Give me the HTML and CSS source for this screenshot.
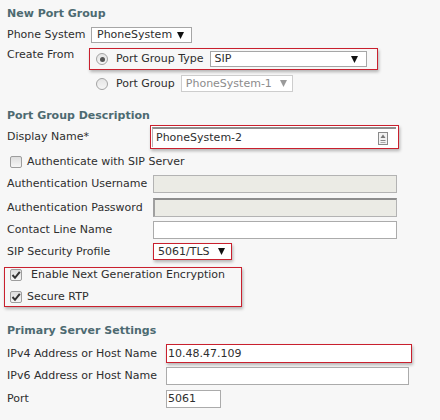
FILE: index.html
```html
<!DOCTYPE html>
<html>
<head>
<meta charset="utf-8">
<link rel="stylesheet" href="styles.css">
</head>
<body>
<div class="page">
  <div class="h">New Port Group</div>

  <div class="row r-phone">
    <div class="lbl w1">Phone System</div>
    <div class="sel sel-phone"><span>PhoneSystem</span><svg class="arr" width="7" height="7" viewBox="0 0 7 7"><polygon points="0,0 7,0 3.5,7" fill="#111"/></svg></div>
  </div>

  <div class="row r-create">
    <div class="lbl w1b">Create From</div>
    <div class="mark mark-create">
      <span class="radio on"></span>
      <span class="rtext">Port Group Type</span>
      <div class="sel sel-sip"><span>SIP</span><svg class="arr" width="7" height="7" viewBox="0 0 7 7"><polygon points="0,0 7,0 3.5,7" fill="#111"/></svg></div>
    </div>
  </div>

  <div class="row r-radio2">
    <span class="radio"></span>
    <span class="rtext">Port Group</span>
    <div class="sel sel-dis"><span>PhoneSystem-1</span><svg class="arr" width="7" height="7" viewBox="0 0 7 7"><polygon points="0,0 7,0 3.5,7" fill="#9a9a9a"/></svg></div>
  </div>

  <div class="h h2">Port Group Description</div>

  <div class="row r-display">
    <div class="lbl w2a">Display Name*</div>
    <div class="mark mark-display">
      <div class="inp inp-display"><span>PhoneSystem-2</span>
        <svg class="ico" width="10" height="13" viewBox="0 0 10 13"><rect x="0.5" y="0.5" width="9" height="12" fill="#f2f2f2" stroke="#8a8a8a"/><polygon points="5,2.5 7.5,6 2.5,6" fill="#777"/><rect x="2.5" y="8" width="5" height="1" fill="#888"/><rect x="2.5" y="10" width="5" height="1" fill="#aaa"/></svg>
      </div>
    </div>
  </div>

  <div class="row r-auth">
    <span class="cb"></span>
    <span class="cbtext">Authenticate with SIP Server</span>
  </div>

  <div class="row r-user">
    <div class="lbl w2">Authentication Username</div>
    <div class="inp inp-dis"></div>
  </div>

  <div class="row r-pass">
    <div class="lbl w2">Authentication Password</div>
    <div class="inp inp-dis inp-inset"></div>
  </div>

  <div class="row r-contact">
    <div class="lbl w2">Contact Line Name</div>
    <div class="inp inp-wide"></div>
  </div>

  <div class="row r-sipsec">
    <div class="lbl w2">SIP Security Profile</div>
    <div class="mark mark-sipsec"><span>5061/TLS</span><svg class="arr" width="7" height="7" viewBox="0 0 7 7"><polygon points="0,0 7,0 3.5,7" fill="#111"/></svg></div>
  </div>

  <div class="mark mark-checks">
    <div class="crow">
      <span class="cb on"><svg width="10" height="10" viewBox="0 0 10 10"><path d="M1.5 5 L4 7.8 L8.8 1.8" fill="none" stroke="#333" stroke-width="2"/></svg></span>
      <span class="cbtext t-wide">Enable Next Generation Encryption</span>
    </div>
    <div class="crow">
      <span class="cb on"><svg width="10" height="10" viewBox="0 0 10 10"><path d="M1.5 5 L4 7.8 L8.8 1.8" fill="none" stroke="#333" stroke-width="2"/></svg></span>
      <span class="cbtext">Secure RTP</span>
    </div>
  </div>

  <div class="h h3">Primary Server Settings</div>

  <div class="row r-ipv4">
    <div class="lbl w3">IPv4 Address or Host Name</div>
    <div class="mark mark-ipv4"><span>10.48.47.109</span></div>
  </div>

  <div class="row r-ipv6">
    <div class="lbl w3">IPv6 Address or Host Name</div>
    <div class="inp inp-ipv6"></div>
  </div>

  <div class="row r-port">
    <div class="lbl w3">Port</div>
    <div class="inp inp-port"><span>5061</span></div>
  </div>
</div>
</body>
</html>
```

FILE: styles.css
```css
* { box-sizing: border-box; }

body {
  margin: 0;
  background: #f7f7f7;
  font-family: "DejaVu Sans", Verdana, sans-serif;
  font-size: 11px;
  color: #2e2e2e;
}

.page {
  padding: 7px 0 0 7px;
  display: flex;
  flex-direction: column;
  align-items: flex-start;
}

.h {
  font-weight: bold;
  color: #4d6a71;
  line-height: 14px;
  height: 14px;
  white-space: nowrap;
}
.h2 { margin-top: 17px; }
.h3 { margin-top: 17px; }

.row {
  display: flex;
  align-items: center;
  white-space: nowrap;
}

.lbl { line-height: 14px; flex: none; }
.w1 { width: 84px; }
.w1b { width: 82px; }
.w2a { width: 143px; }
.w2 { width: 146px; }
.w3 { width: 159px; }

/* selects */
.sel {
  display: flex;
  align-items: center;
  justify-content: space-between;
  background: #fff;
  border: 1px solid #a6a6a6;
  line-height: 14px;
}
.arr { flex: none; display: block; }

.r-phone { margin-top: 6px; height: 16px; }
.sel-phone { width: 101px; height: 16px; padding: 0 7px 0 5px; }

.r-create { margin-top: 5px; height: 22px; align-items: flex-start; }

.mark {
  border: 1px solid #c9202e;
  box-shadow: 1px 2px 3px rgba(0, 0, 0, 0.28);
}

.mark-create {
  width: 289px;
  height: 22px;
  display: flex;
  align-items: center;
  padding-left: 6px;
}

.radio {
  flex: none;
  width: 12px;
  height: 12px;
  border-radius: 50%;
  border: 1px solid #a3a3a3;
  background: linear-gradient(#e4e4e4, #f6f6f6);
  display: inline-flex;
  align-items: center;
  justify-content: center;
}
.radio.on::after {
  content: "";
  width: 5px;
  height: 5px;
  border-radius: 50%;
  background: #555;
}

.rtext { margin-left: 8px; line-height: 14px; }

.sel-sip { width: 157px; height: 16px; margin-left: 6px; padding: 0 8px 0 4px; }

.r-radio2 { margin-top: 5px; height: 17px; padding-left: 89px; }
.sel-dis {
  width: 112px;
  height: 17px;
  margin-left: 6px;
  padding: 0 5px 0 4px;
  border-color: #cdcdcd;
  color: #8c8c8c;
}

.r-display { margin-top: 2px; height: 24px; }
.mark-display {
  width: 249px;
  height: 24px;
  padding: 1px 2px 1px 1px;
  background: #fff;
}
.inp {
  background: #fff;
  border: 1px solid #ababab;
  height: 18px;
  display: flex;
  align-items: center;
  line-height: 14px;
}
.inp-display {
  width: 244px;
  height: 20px;
  border: none;
  border-top: 2px solid #8e8e8e;
  border-left: 1px solid #b5b5b5;
  padding: 0 8px 0 3px;
  justify-content: space-between;
}
.ico { display: block; flex: none; }

.r-auth { margin-top: 6px; height: 14px; padding-left: 3px; }

.cb {
  flex: none;
  width: 12px;
  height: 12px;
  border: 1px solid #9d9d9d;
  border-radius: 2px;
  background: linear-gradient(#dedede, #f5f5f5);
  display: inline-flex;
  align-items: center;
  justify-content: center;
}
.cb svg { display: block; }
.cbtext { margin-left: 5px; line-height: 14px; }
.t-wide { margin-left: 9px; }

.r-user { margin-top: 6px; height: 18px; }
.inp-dis { width: 244px; height: 18px; background: #ebebe5; border-color: #b3b3b3; }

.r-pass { margin-top: 5px; height: 19px; }
.inp-inset { height: 19px; border-top: 2px solid #8d8d8d; border-left: 2px solid #a0a0a0; }

.r-contact { margin-top: 4px; height: 18px; }
.inp-wide { width: 244px; }

.r-sipsec { margin-top: 4px; height: 17px; }
.mark-sipsec {
  width: 79px;
  height: 17px;
  background: #fff;
  display: flex;
  align-items: center;
  justify-content: space-between;
  padding: 0 6px 0 4px;
  line-height: 14px;
}

.mark-checks {
  margin-top: 7px;
  margin-left: -3px;
  width: 238px;
  height: 40px;
  padding: 0 0 2px 5px;
  display: flex;
  flex-direction: column;
  gap: 8px;
}
.crow {
  display: flex;
  align-items: center;
  height: 14px;
  white-space: nowrap;
}

.r-ipv4 { margin-top: 6px; height: 19px; }
.mark-ipv4 {
  width: 246px;
  height: 19px;
  background: #fff;
  display: flex;
  align-items: center;
  padding-left: 1px;
  line-height: 14px;
  border-top-width: 1px;
}

.r-ipv6 { margin-top: 4px; height: 18px; }
.inp-ipv6 { width: 243px; }

.r-port { margin-top: 5px; height: 18px; }
.inp-port { width: 55px; padding-left: 1px; }
```
